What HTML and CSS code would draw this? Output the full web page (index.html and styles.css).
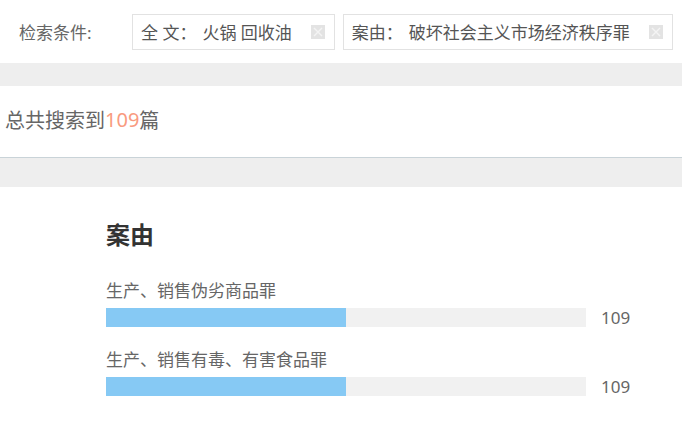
FILE: index.html
```html
<!DOCTYPE html>
<html lang="zh-CN">
<head>
    <meta charset="UTF-8">
    <meta name="viewport" content="width=device-width, initial-scale=1.0">
    <title>检索结果</title>
    <link rel="stylesheet" href="styles.css">
</head>
<body>
    <div class="filter-bar">
        <span class="filter-title">检索条件:</span>
        <div class="tag">
            <span class="tag-label">全 文：</span>
            <span class="tag-value">火锅 回收油</span>
            <svg class="tag-close" width="14" height="14" viewBox="0 0 14 14">
                <rect width="14" height="14" fill="#e3e3e3"/>
                <path d="M3 3 L11 11 M11 3 L3 11" stroke="#f4f4f4" stroke-width="1.4"/>
            </svg>
        </div>
        <div class="tag">
            <span class="tag-label">案由：</span>
            <span class="tag-value">破坏社会主义市场经济秩序罪</span>
            <svg class="tag-close" width="14" height="14" viewBox="0 0 14 14">
                <rect width="14" height="14" fill="#e3e3e3"/>
                <path d="M3 3 L11 11 M11 3 L3 11" stroke="#f4f4f4" stroke-width="1.4"/>
            </svg>
        </div>
    </div>

    <div class="band"></div>

    <div class="result-count">
        总共搜索到<span class="count-num">109</span>篇
    </div>

    <div class="band band-tall"></div>

    <div class="chart">
        <h2 class="chart-title">案由</h2>

        <div class="chart-row">
            <div class="row-label">生产、销售伪劣商品罪</div>
            <div class="row-bar">
                <div class="track"><div class="fill" style="width: 50%;"></div></div>
                <span class="row-num">109</span>
            </div>
        </div>

        <div class="chart-row">
            <div class="row-label">生产、销售有毒、有害食品罪</div>
            <div class="row-bar">
                <div class="track"><div class="fill" style="width: 50%;"></div></div>
                <span class="row-num">109</span>
            </div>
        </div>
    </div>
</body>
</html>
```

FILE: styles.css
```css
* {
    box-sizing: border-box;
    font-family: "Noto Sans", "Noto Sans CJK SC", sans-serif;
}

body {
    margin: 0;
    background-color: #fff;
    color: #666;
}

.filter-bar {
    height: 63px;
    display: flex;
    align-items: center;
    padding-left: 19px;
    white-space: nowrap;
}

.filter-title {
    flex-shrink: 0;
    font-size: 17px;
    width: 113px;
    color: #666;
}

.tag {
    flex-shrink: 0;
    display: flex;
    align-items: center;
    height: 36px;
    margin-right: 8px;
    padding: 0 9px 0 8px;
    border: 1px solid #e2e2e2;
    font-size: 17px;
    color: #555;
}

.tag-label {
    margin-right: 6px;
}

.tag-close {
    flex-shrink: 0;
    margin-left: 19px;
    display: block;
}

.band {
    height: 23px;
    background-color: #eeeeee;
}

.band-tall {
    height: 29px;
}

.result-count {
    height: 72px;
    display: flex;
    align-items: center;
    padding: 0 5px 4px;
    font-size: 20px;
    color: #666;
    border-bottom: 1px solid #c9d3d8;
}

.count-num {
    color: #f99b80;
}

.chart {
    padding: 32px 0 0 106px;
}

.chart-title {
    margin: 0 0 28px;
    font-size: 24px;
    line-height: 32px;
    font-weight: bold;
    color: #333;
}

.chart-row {
    margin-bottom: 21px;
}

.row-label {
    font-size: 17px;
    line-height: 24px;
    color: #666;
}

.row-bar {
    display: flex;
    align-items: center;
    margin-top: 5px;
}

.track {
    width: 480px;
    height: 19px;
    background-color: #f1f1f1;
}

.fill {
    height: 100%;
    background-color: #86c9f4;
}

.row-num {
    margin-left: 15px;
    font-size: 17px;
    line-height: 19px;
    color: #666;
}
```
